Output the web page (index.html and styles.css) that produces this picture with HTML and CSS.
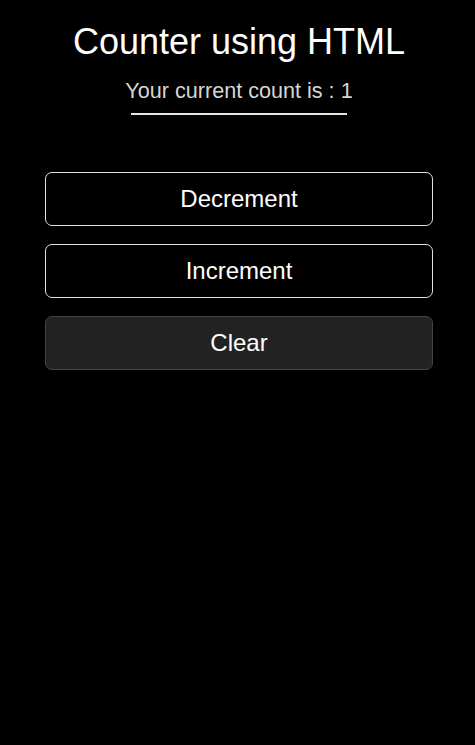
FILE: index.html
```html
<!DOCTYPE html>
<html>
<head>
<meta charset="utf-8">
<title>Counter using HTML</title>
<link rel="stylesheet" href="styles.css">
</head>
<body>
<main class="app">
  <h1 class="title">Counter using HTML</h1>
  <p class="count">Your current count is : <span>1</span></p>
  <div class="rule"></div>
  <div class="actions">
    <button class="btn">Decrement</button>
    <button class="btn">Increment</button>
    <button class="btn btn-clear">Clear</button>
  </div>
</main>
</body>
</html>
```
FILE: styles.css
```css
html, body {
  margin: 0;
  background: #000;
}
body {
  padding-left: 3px;
  font-family: "Liberation Sans", Arial, sans-serif;
  color: #fff;
}
.app {
  width: 388px;
  margin: 0 auto;
  display: flex;
  flex-direction: column;
  align-items: center;
  padding-top: 22px;
}
.title {
  margin: 0;
  font-size: 36px;
  font-weight: normal;
  line-height: 40px;
}
.count {
  margin: 16px 0 0;
  font-size: 21.6px;
  line-height: 26px;
  color: #d6d6d6;
}
.rule {
  width: 216px;
  height: 2px;
  background: #e6e6e6;
  margin-top: 9px;
}
.actions {
  width: 100%;
  display: flex;
  flex-direction: column;
  gap: 18px;
  margin-top: 57px;
}
.btn {
  height: 54px;
  width: 100%;
  background: #000;
  color: #fff;
  border: 1px solid #e0e0e0;
  border-radius: 7px;
  font-family: "Liberation Sans", Arial, sans-serif;
  font-size: 24px;
  padding: 0;
}
.btn-clear {
  background: #222;
  border-color: #444;
}
```
